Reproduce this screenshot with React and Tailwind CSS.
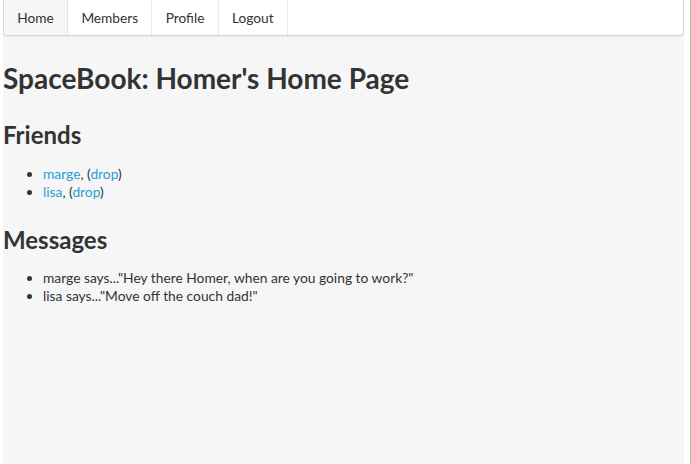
const friends = ['marge', 'lisa'];

const messages = [
    { from: 'marge', text: 'Hey there Homer, when are you going to work?' },
    { from: 'lisa', text: 'Move off the couch dad!' },
];

const tabs = ['Home', 'Members', 'Profile', 'Logout'];

function NavBar() {
    return (
        <nav className="flex h-[36px] bg-white border border-t-0 border-[#d6d6d6] rounded-b-[4px] shadow-[0_1px_1px_rgba(0,0,0,0.05)]">
            {tabs.map((t, i) => (
                <a
                    key={t}
                    href="#"
                    className={
                        'flex items-center pt-[2px] px-[13.3px] text-[13.7px] text-[#333] border-r border-[#e7e7e7] ' +
                        (i === 0 ? 'bg-[#f6f6f6] rounded-bl-[4px]' : '')
                    }
                >
                    {t}
                </a>
            ))}
        </nav>
    );
}

export default function App() {
    return (
        <div className="flex h-[464px] w-[691px] bg-white font-['Lato','Liberation_Sans',sans-serif] text-[#333]">
            <div className="ml-[3px] w-[681px] h-full bg-[#f6f6f6]">
                <NavBar />

                <h1 className="mt-[25px] text-[28px] leading-[34px] font-bold">SpaceBook: Homer's Home Page</h1>

                <h2 className="mt-[25px] text-[24px] leading-[30px] font-bold">Friends</h2>
                <ul className="mt-[15px] pl-[40px] list-disc text-[13.8px] leading-[18px]">
                    {friends.map((f) => (
                        <li key={f}>
                            <a href="#" className="text-[#2a9fd6]">{f}</a>, (<a href="#" className="text-[#2a9fd6]">drop</a>)
                        </li>
                    ))}
                </ul>

                <h2 className="mt-[24px] text-[24px] leading-[30px] font-bold">Messages</h2>
                <ul className="mt-[14px] pl-[40px] list-disc text-[13.8px] leading-[18px]">
                    {messages.map((m, i) => (
                        <li key={i}>{m.from} says..."{m.text}"</li>
                    ))}
                </ul>
            </div>
            <div className="ml-[6px] w-px h-full bg-[#b4b4b4]" />
        </div>
    );
}
